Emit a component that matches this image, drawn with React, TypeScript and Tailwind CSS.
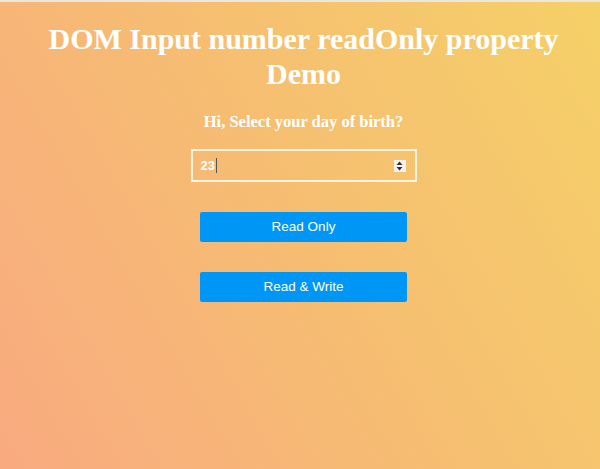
import React from 'react'

export default function App() {
  const buttons = ['Read Only', 'Read & Write']

  return (
    <div className="h-[469px] w-full overflow-hidden border-t-2 border-[#ebe6df] bg-[linear-gradient(60deg,#f9aa80_0%,#f6bd72_50%,#f5d068_100%)]">
      <div className="flex flex-col items-center pl-[7px]">
        <h1
          className="mt-[19px] max-w-[540px] text-center text-[30px] font-bold leading-[35px] text-white"
          style={{ fontFamily: '"Liberation Serif", "Times New Roman", serif' }}
        >
          DOM Input number readOnly property Demo
        </h1>
        <h4
          className="mt-[21px] text-[16.5px] font-bold leading-[19px] text-white"
          style={{ fontFamily: '"Liberation Serif", "Times New Roman", serif' }}
        >
          Hi, Select your day of birth?
        </h4>

        <div className="mt-[18px] flex h-[33px] w-[226px] items-center border-2 border-[#fdf3df] pl-[8px] pr-[9px]">
          <span
            className="text-[13px] font-bold text-white"
            style={{ fontFamily: '"Liberation Sans", Arial, sans-serif' }}
          >
            23
          </span>
          <span className="ml-px h-[15px] w-px bg-[#555]" />
          <div className="ml-auto flex h-[12px] w-[12px] items-center justify-center bg-[#f4f2ee]">
            <svg width="7" height="10" viewBox="0 0 7 10">
              <path d="M3.5 0.5 L6.5 4 L0.5 4 Z" fill="#333" />
              <path d="M3.5 9.5 L6.5 6 L0.5 6 Z" fill="#333" />
            </svg>
          </div>
        </div>

        <div className="mt-[30px] flex flex-col gap-[30px]">
          {buttons.map((label) => (
            <button
              key={label}
              className="h-[30px] w-[207px] rounded-[2px] bg-[#0096f5] text-[13.5px] text-white"
              style={{ fontFamily: '"Liberation Sans", Arial, sans-serif' }}
            >
              {label}
            </button>
          ))}
        </div>
      </div>
    </div>
  )
}
